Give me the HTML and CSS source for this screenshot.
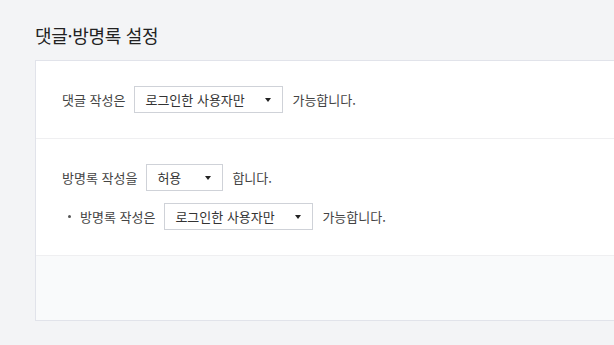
FILE: index.html
```html
<!DOCTYPE html>
<html lang="ko">
<head>
    <meta charset="UTF-8">
    <title>댓글·방명록 설정</title>
    <link rel="stylesheet" href="styles.css">
</head>
<body>
    <h1 class="title">댓글·방명록 설정</h1>
    <div class="panel">
        <div class="section">
            <div class="row">
                <span>댓글 작성은</span>
                <div class="select wide"><span>로그인한 사용자만</span><i class="arrow"></i></div>
                <span>가능합니다.</span>
            </div>
        </div>
        <div class="section">
            <div class="row">
                <span>방명록 작성을</span>
                <div class="select short"><span>허용</span><i class="arrow"></i></div>
                <span>합니다.</span>
            </div>
            <div class="row sub">
                <span class="dot"></span>
                <span>방명록 작성은</span>
                <div class="select wide"><span>로그인한 사용자만</span><i class="arrow"></i></div>
                <span>가능합니다.</span>
            </div>
        </div>
        <div class="footer"></div>
    </div>
</body>
</html>
```

FILE: styles.css
```css
body {
    margin: 0;
    padding: 0 0 0 35px;
    background-color: #f3f4f6;
    font-family: "Noto Sans CJK KR", "Noto Sans", sans-serif;
    color: #444;
    overflow: hidden;
}

.title {
    margin: 0;
    padding-top: 22px;
    height: 60px;
    box-sizing: border-box;
    font-size: 18px;
    font-weight: normal;
    color: #222;
    line-height: 26px;
    letter-spacing: -0.3px;
}

.panel {
    background: #fff;
    border: 1px solid #e1e3ea;
    border-right: none;
}

.section {
    padding: 25px 0 25px 26px;
    border-bottom: 1px solid #efeff1;
    display: flex;
    flex-direction: column;
    gap: 12px;
}

.row {
    display: flex;
    align-items: center;
    gap: 9px;
    font-size: 13px;
    height: 27px;
}

.row.sub {
    padding-left: 6px;
}

.dot {
    width: 3px;
    height: 3px;
    background: #555;
    border-radius: 50%;
}

.select {
    height: 27px;
    box-sizing: border-box;
    border: 1px solid #cfd2d8;
    background: #fff;
    display: flex;
    align-items: center;
    justify-content: space-between;
    padding: 0 11px 0 10px;
    color: #333;
}

.select.wide {
    width: 149px;
}

.select.short {
    width: 77px;
}

.arrow {
    width: 0;
    height: 0;
    border-left: 3.5px solid transparent;
    border-right: 3.5px solid transparent;
    border-top: 4px solid #222;
}

.footer {
    height: 64px;
    background: #f9fafb;
}
```
